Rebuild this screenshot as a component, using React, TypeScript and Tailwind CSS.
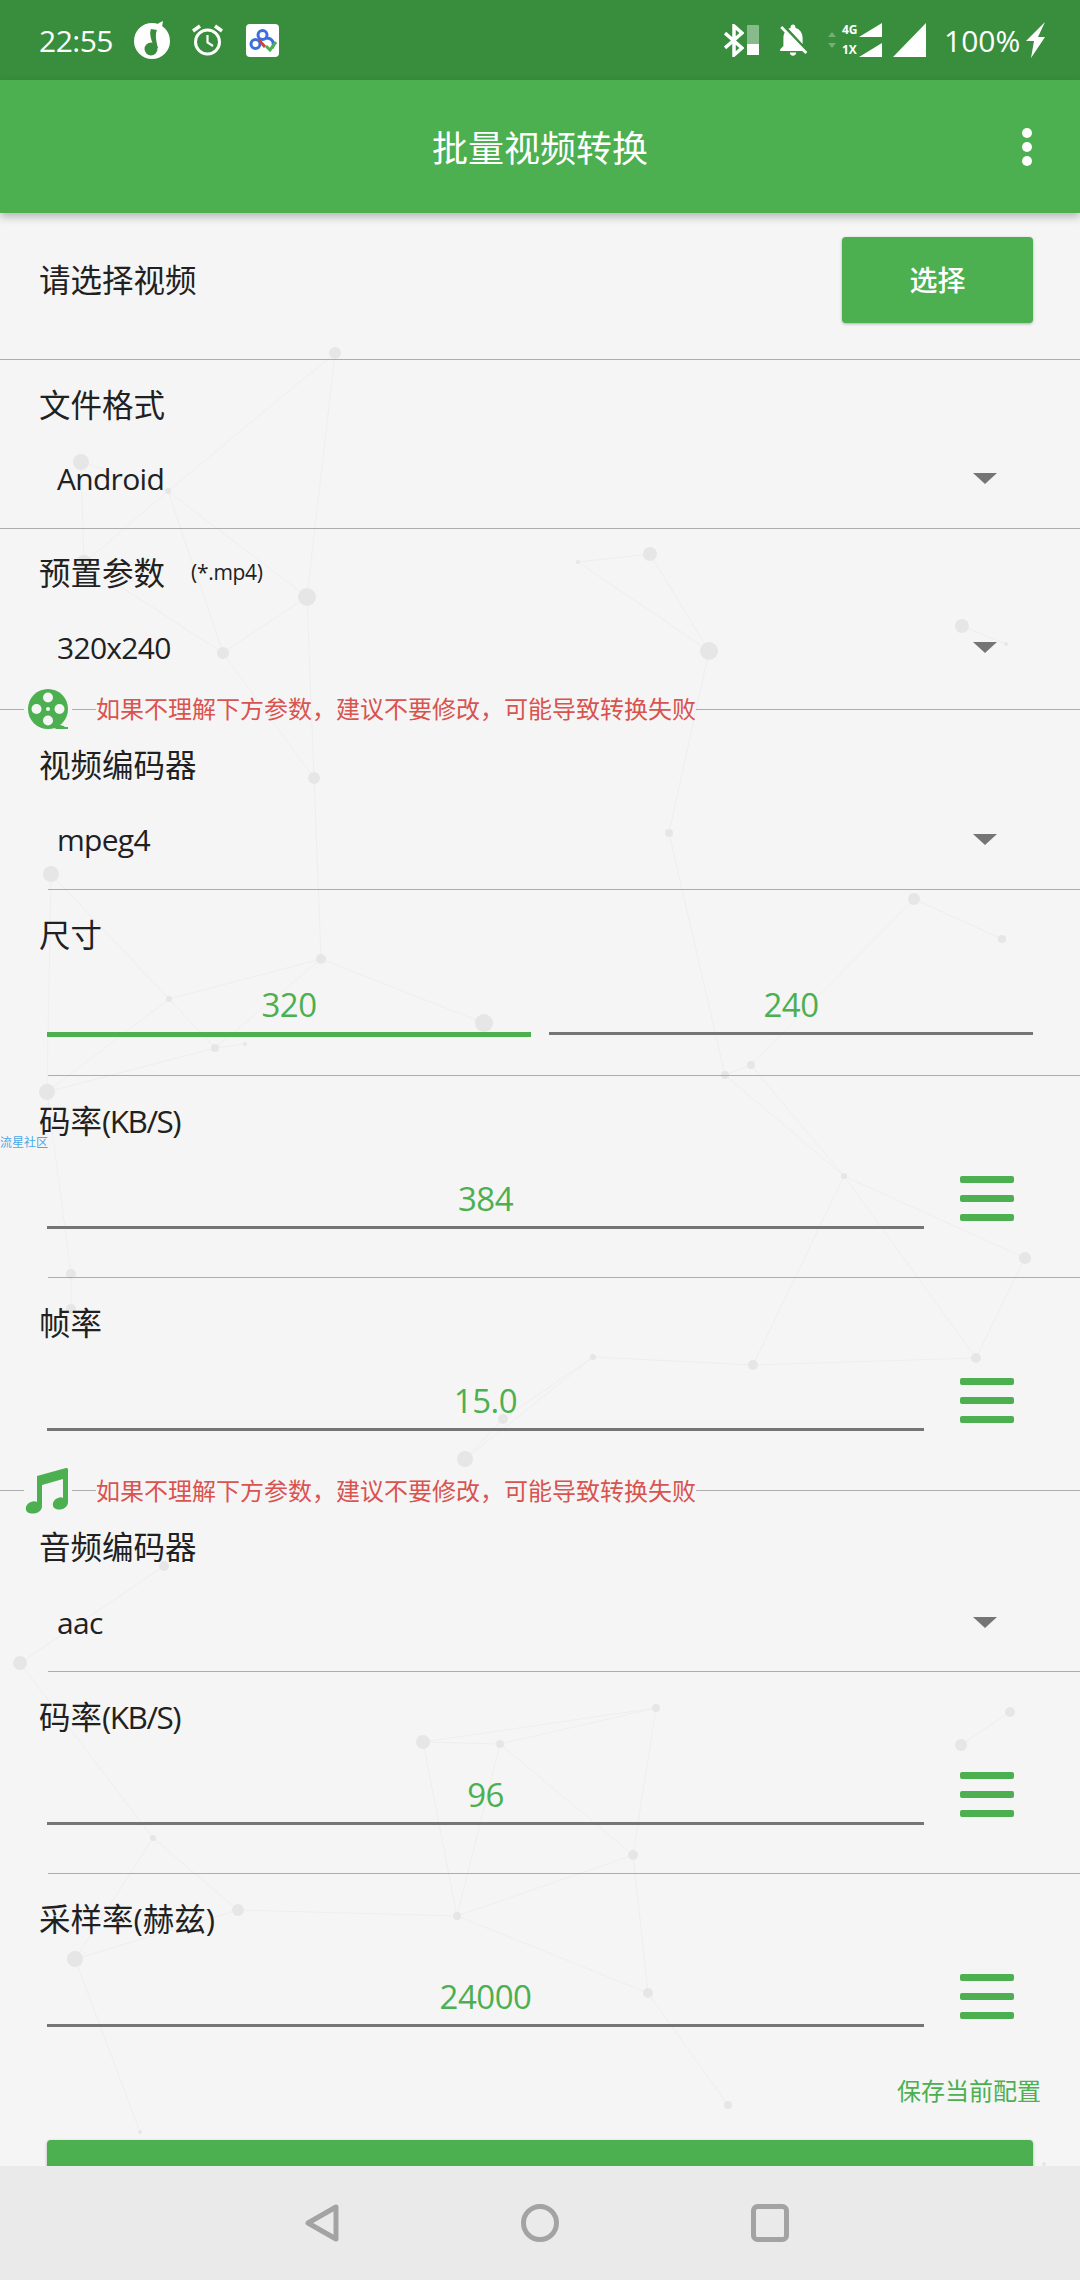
import React from "react";

const GREEN = "#4CAF50";

// background particle network, full-page coordinates
const nodes: [number, number, number][] = [
  [335, 353, 6], [81, 462, 8], [168, 491, 3], [84, 563, 8], [307, 597, 9], [223, 653, 6],
  [578, 562, 2], [650, 554, 7], [709, 651, 9], [962, 626, 7], [1006, 644, 2],
  [314, 778, 6], [51, 874, 8], [321, 959, 5], [169, 999, 3], [484, 1023, 9], [215, 1048, 4], [245, 1044, 2], [47, 1092, 8],
  [669, 833, 4], [914, 899, 6], [1002, 939, 4], [751, 1065, 4], [725, 1075, 4],
  [71, 1274, 5], [71, 1309, 5], [503, 1419, 5], [465, 1459, 8],
  [844, 1176, 3], [1025, 1258, 6], [976, 1358, 5], [753, 1365, 5], [593, 1357, 3],
  [164, 1566, 5], [20, 1663, 7], [423, 1742, 7], [500, 1744, 4], [153, 1838, 3], [238, 1910, 6], [457, 1916, 4],
  [656, 1708, 4], [1010, 1712, 5], [961, 1745, 6], [633, 1855, 5],
  [75, 1959, 8], [140, 2132, 2], [648, 1993, 5], [728, 2105, 4], [1044, 2164, 2],
];

const edges: [number, number][] = [
  [0, 2], [0, 4], [1, 2], [1, 3], [2, 3], [2, 5], [2, 4], [4, 5], [4, 11], [3, 5], [5, 11],
  [6, 7], [6, 8], [7, 8], [8, 19], [9, 10], [11, 13], [12, 14], [12, 18], [14, 13], [14, 16], [14, 18],
  [13, 15], [13, 16], [16, 17], [16, 18], [20, 21], [20, 22], [22, 23], [23, 28], [22, 28], [19, 23],
  [18, 24], [24, 25], [28, 29], [28, 31], [28, 30], [29, 30], [30, 31], [31, 32], [32, 26], [32, 27], [26, 27],
  [33, 34], [34, 37], [35, 36], [35, 39], [36, 39], [36, 40], [35, 40], [36, 43], [40, 43], [37, 38], [37, 44],
  [38, 39], [44, 45], [44, 38], [39, 43], [43, 46], [39, 46], [46, 47], [41, 42],
];

function Network() {
  return (
    <svg className="absolute inset-0 w-full h-full" viewBox="0 213 1080 1953">
      {edges.map(([a, b], i) => (
        <line
          key={i}
          x1={nodes[a][0]}
          y1={nodes[a][1]}
          x2={nodes[b][0]}
          y2={nodes[b][1]}
          stroke="#eeeeee"
          strokeWidth="1"
        />
      ))}
      {nodes.map(([x, y, r], i) => (
        <circle key={i} cx={x} cy={y} r={r} fill="#e6e6e6" />
      ))}
    </svg>
  );
}

function StatusBar() {
  return (
    <div className="h-[80px] shrink-0 bg-[#388E3C] flex items-center justify-between pl-[39px] pr-[35px] text-white text-[30px]">
      <div className="flex items-center">
        <span className="w-[72px] tracking-[-0.5px]">22:55</span>
        {/* music app */}
        <svg className="ml-[23px]" width="36" height="38" viewBox="0 0 36 38">
          <circle cx="18" cy="20" r="18" fill="#fff" />
          <path d="M25 2 L29 0 L28 6 C25 7 23 9 23 12 L23 28 L21 28 L20 13 C20 8 22 4 25 2 Z" fill="#fff" />
          <path d="M17 8 C15 12 17 20 21 27 L24 27 C22 20 21 13 23 9 Z" fill="#388E3C" />
          <circle cx="17" cy="28" r="6.5" fill="#388E3C" />
        </svg>
        {/* alarm */}
        <svg className="ml-[22px]" width="31" height="32" viewBox="0 0 31 32" fill="none" stroke="#fff">
          <circle cx="15.5" cy="18" r="12" strokeWidth="3" />
          <path d="M15.5 11 V18.5 L21 22" strokeWidth="2.2" />
          <path d="M1 7 L8 2 M30 7 L23 2" strokeWidth="3.5" />
        </svg>
        {/* cloud drive */}
        <svg className="ml-[23px]" width="33" height="33" viewBox="0 0 33 33" fill="none">
          <rect width="33" height="33" rx="4" fill="#fff" />
          <circle cx="16.5" cy="11" r="4.5" stroke="#3b6fe0" strokeWidth="3" />
          <circle cx="9.5" cy="20" r="4.5" stroke="#3b6fe0" strokeWidth="3" />
          <path d="M13 16 L19 23" stroke="#c9463d" strokeWidth="3" />
          <path d="M20 14 C27 14 29 20 26 24" stroke="#3b6fe0" strokeWidth="3" />
          <path d="M20 22 L24 26 L30 18" stroke="#4CAF50" strokeWidth="3" />
        </svg>
      </div>
      <div className="flex items-center">
        <svg width="20" height="33" viewBox="0 0 20 33" fill="none" stroke="#fff" strokeWidth="3.5">
          <path d="M1 9 L18 24 L10 31 V2 L18 9 L1 24" />
        </svg>
        <div className="ml-[3px] w-[12px] h-[30px] flex flex-col">
          <div className="h-[19px] bg-white/40 rounded-t-[1px]" />
          <div className="h-[11px] bg-white" />
        </div>
        <svg className="ml-[18px]" width="32" height="35" viewBox="2 2 20 21" fill="#fff">
          <path d="M20 18.69L7.84 6.14 5.27 3.49 4 4.76l2.8 2.8v.01c-.52.99-.8 2.16-.8 3.42v5l-2 2v1h13.73l2 2L21 19.72l-1-1.03zM12 22c1.11 0 2-.89 2-2h-4c0 1.11.89 2 2 2zm6-7.32V11c0-3.08-1.64-5.64-4.5-6.32V4c0-.83-.67-1.5-1.5-1.5s-1.5.67-1.5 1.5v.68c-.15.03-.29.08-.42.12-.1.03-.2.07-.3.11h-.01c-.2.08-.4.17-.59.27-.01 0-.01 0-.02.01L18 14.68z" />
        </svg>
        <svg className="ml-[19px]" width="8" height="16" viewBox="0 0 8 16" fill="#ffffff" fillOpacity="0.3">
          <path d="M4 0 L8 5 H0 Z M4 16 L8 11 H0 Z" />
        </svg>
        <div className="ml-[6px] w-[15px] h-[34px] flex flex-col justify-between text-[12px] leading-[14px] font-bold">
          <span>4G</span>
          <span>1X</span>
        </div>
        <svg className="ml-[2px]" width="23" height="34" viewBox="0 0 23 34" fill="#fff">
          <path d="M23 0 V14 H0 Z M23 20 V34 H0 Z" />
        </svg>
        <svg className="ml-[11px]" width="33" height="34" viewBox="0 0 33 34" fill="#fff">
          <path d="M33 0 V34 H0 Z" />
        </svg>
        <span className="ml-[18px] w-[75px]">100%</span>
        <svg className="ml-[7px]" width="19" height="36" viewBox="0 0 19 36" fill="#fff">
          <path d="M19 0 L12 15 H19 L5 36 L8 19 H0 Z" />
        </svg>
      </div>
    </div>
  );
}

function Toolbar() {
  return (
    <div className="relative z-10 h-[133px] shrink-0 bg-[#4CAF50] flex items-center justify-center pt-[4px] shadow-[0_4px_8px_rgba(0,0,0,0.25)]">
      <span className="text-[36px] text-white">批量视频转换</span>
      <div className="absolute right-[48px] top-[48px] flex flex-col gap-[4px]">
        <div className="w-[10px] h-[10px] rounded-full bg-white" />
        <div className="w-[10px] h-[10px] rounded-full bg-white" />
        <div className="w-[10px] h-[10px] rounded-full bg-white" />
      </div>
    </div>
  );
}

function Divider({ inset }: { inset?: boolean }) {
  return <div className={inset ? "ml-[48px] h-px bg-[#adadad]" : "h-px bg-[#adadad]"} />;
}

function Label({ children }: { children: React.ReactNode }) {
  return <div className="h-[40px] leading-[40px] pl-[39px] text-[31.5px] text-[#212121]">{children}</div>;
}

function SelectValue({ value }: { value: string }) {
  return (
    <div className="h-[40px] flex items-center justify-between pl-[57px] pr-[83px] text-[30px] tracking-[-0.7px] text-[#212121]">
      <span>{value}</span>
      <div className="w-0 h-0 border-x-[12px] border-x-transparent border-t-[11px] border-t-[#757575]" />
    </div>
  );
}

function Notice({ icon, className }: { icon: React.ReactNode; className: string }) {
  return (
    <div className={`flex items-center ${className}`}>
      <div className="w-[24px] h-px bg-[#adadad]" />
      <div className="w-[48px] flex justify-center">{icon}</div>
      <div className="w-[24px] h-px bg-[#adadad]" />
      <span className="text-[24px] leading-[32px] text-[#D9534F] whitespace-nowrap">
        如果不理解下方参数，建议不要修改，可能导致转换失败
      </span>
      <div className="flex-1 h-px bg-[#adadad]" />
    </div>
  );
}

function Field({ value, active, className }: { value: string; active?: boolean; className: string }) {
  return (
    <div
      className={`text-center text-[33px] tracking-[-0.5px] leading-[52px] text-[#4CAF50] ${
        active ? "h-[58px] border-b-[5px] border-[#4CAF50]" : "h-[56px] border-b-[3px] border-[#757575]"
      } ${className}`}
    >
      {value}
    </div>
  );
}

function InputRow({ label, value, last }: { label: React.ReactNode; value: string; last?: boolean }) {
  return (
    <div>
      <div className="h-[65px] pt-[25px]">
        <Label>{label}</Label>
      </div>
      <div className="mt-[32px] pl-[47px] flex items-start">
        <Field value={value} className="w-[877px]" />
        <div className="ml-[36px] mt-[3px] w-[54px] flex flex-col gap-[12px]">
          <div className="h-[7px] rounded-[2px] bg-[#4CAF50]" />
          <div className="h-[7px] rounded-[2px] bg-[#4CAF50]" />
          <div className="h-[7px] rounded-[2px] bg-[#4CAF50]" />
        </div>
      </div>
      {!last && <div className="h-[48px]" />}
    </div>
  );
}

const KbLabel = (
  <>
    码率<span className="tracking-[-1.5px]">(KB/S)</span>
  </>
);

export default function App() {
  return (
    <div className="w-[1080px] h-[2280px] flex flex-col overflow-hidden bg-[#F5F5F5] font-['Open_Sans','Noto_Sans_CJK_SC',sans-serif]">
      <StatusBar />
      <Toolbar />

      <div className="relative flex-1 min-h-0 overflow-hidden">
        <Network />
        <div className="relative">
          {/* pick video */}
          <div className="h-[146px] pl-[39px] pr-[47px] pb-[12px] flex items-center justify-between text-[31.5px] text-[#212121]">
            <span>请选择视频</span>
            <button className="w-[191px] h-[86px] rounded-[4px] bg-[#4CAF50] text-white text-[28px] font-medium shadow-[0_1px_3px_rgba(0,0,0,0.3)]">
              选择
            </button>
          </div>
          <Divider />

          <div className="h-[168px] pt-[25px]">
            <Label>文件格式</Label>
            <div className="mt-[33px]">
              <SelectValue value="Android" />
            </div>
          </div>
          <Divider />

          <div className="h-[160px] pt-[24px]">
            <div className="flex items-center">
              <Label>预置参数</Label>
              <span className="ml-[26px] text-[21px] tracking-[-0.3px] text-[#212121]">(*.mp4)</span>
            </div>
            <div className="mt-[34px]">
              <SelectValue value="320x240" />
            </div>
          </div>

          <Notice
            className="h-[40px]"
            icon={
              <svg width="40" height="40" viewBox="0 0 40 40">
                <path d="M20 38 H40 V40 H30 Z M24 34 L36 37 L38 40 H28 Z" fill={GREEN} />
                <circle cx="20" cy="20" r="20" fill={GREEN} />
                <circle cx="20" cy="8.5" r="5" fill="#F5F5F5" />
                <circle cx="20" cy="31.5" r="5" fill="#F5F5F5" />
                <circle cx="8.5" cy="20" r="5" fill="#F5F5F5" />
                <circle cx="31.5" cy="20" r="5" fill="#F5F5F5" />
                <circle cx="20" cy="20" r="2" fill="#F5F5F5" />
              </svg>
            }
          />

          <div className="h-[160px] pt-[16px]">
            <Label>视频编码器</Label>
            <div className="mt-[34px]">
              <SelectValue value="mpeg4" />
            </div>
          </div>
          <Divider inset />

          <div className="h-[185px]">
            <div className="h-[65px] pt-[25px]">
              <Label>尺寸</Label>
            </div>
            <div className="mt-[24px] pl-[47px] flex items-start gap-[18px]">
              <Field value="320" active className="w-[484px]" />
              <Field value="240" className="w-[484px]" />
            </div>
          </div>
          <Divider inset />

          {/* watermark sits over the bitrate row */}
          <div className="relative">
            <InputRow label={KbLabel} value="384" />
            <span className="absolute left-0 top-[58px] text-[12px] leading-[18px] text-[#4aa8e8]">流星社区</span>
          </div>
          <Divider inset />

          <div className="h-[189px]">
            <InputRow label="帧率" value="15.0" last />
          </div>

          <Notice
            className="h-[47px]"
            icon={
              <svg className="-ml-[3px]" width="43" height="47" viewBox="0 0 43 47" fill={GREEN}>
                <path d="M12 9 L41 1 C42 1 43 1 43 3 V35 C43 41 36 44 31 42 C26 40 27 33 33 31 C35 30 37 30 38 31 V12 L17 18 V39 C17 45 10 48 4 46 C-1 44 0 37 6 35 C8 34 10 34 12 35 Z" />
              </svg>
            }
          />

          <div className="h-[157px] pt-[13px]">
            <Label>音频编码器</Label>
            <div className="mt-[35px]">
              <SelectValue value="aac" />
            </div>
          </div>
          <Divider inset />

          <InputRow label={KbLabel} value="96" />
          <Divider inset />

          <InputRow label="采样率(赫兹)" value="24000" last />

          <div className="mt-[44px] h-[40px] leading-[40px] pr-[39px] text-right text-[24px] text-[#4CAF50]">
            保存当前配置
          </div>
          <div className="mt-[29px] mx-[47px] h-[120px] rounded-[4px] bg-[#4CAF50] shadow-[0_1px_3px_rgba(0,0,0,0.3)]" />
        </div>
      </div>

      {/* nav bar */}
      <div className="relative z-10 h-[114px] shrink-0 bg-[#EAEAEA] pt-[38px] pl-[305px] flex items-start">
        <svg width="34" height="38" viewBox="0 0 34 38" fill="none" stroke="#A3A3A3" strokeWidth="5" strokeLinejoin="round">
          <path d="M31 3 V35 L3 19 Z" />
        </svg>
        <svg className="ml-[182px]" width="38" height="38" viewBox="0 0 38 38" fill="none" stroke="#A3A3A3" strokeWidth="5">
          <circle cx="19" cy="19" r="16.5" />
        </svg>
        <svg className="ml-[192px]" width="38" height="38" viewBox="0 0 38 38" fill="none" stroke="#A3A3A3" strokeWidth="5">
          <rect x="2.5" y="2.5" width="33" height="33" rx="4" />
        </svg>
      </div>
    </div>
  );
}
